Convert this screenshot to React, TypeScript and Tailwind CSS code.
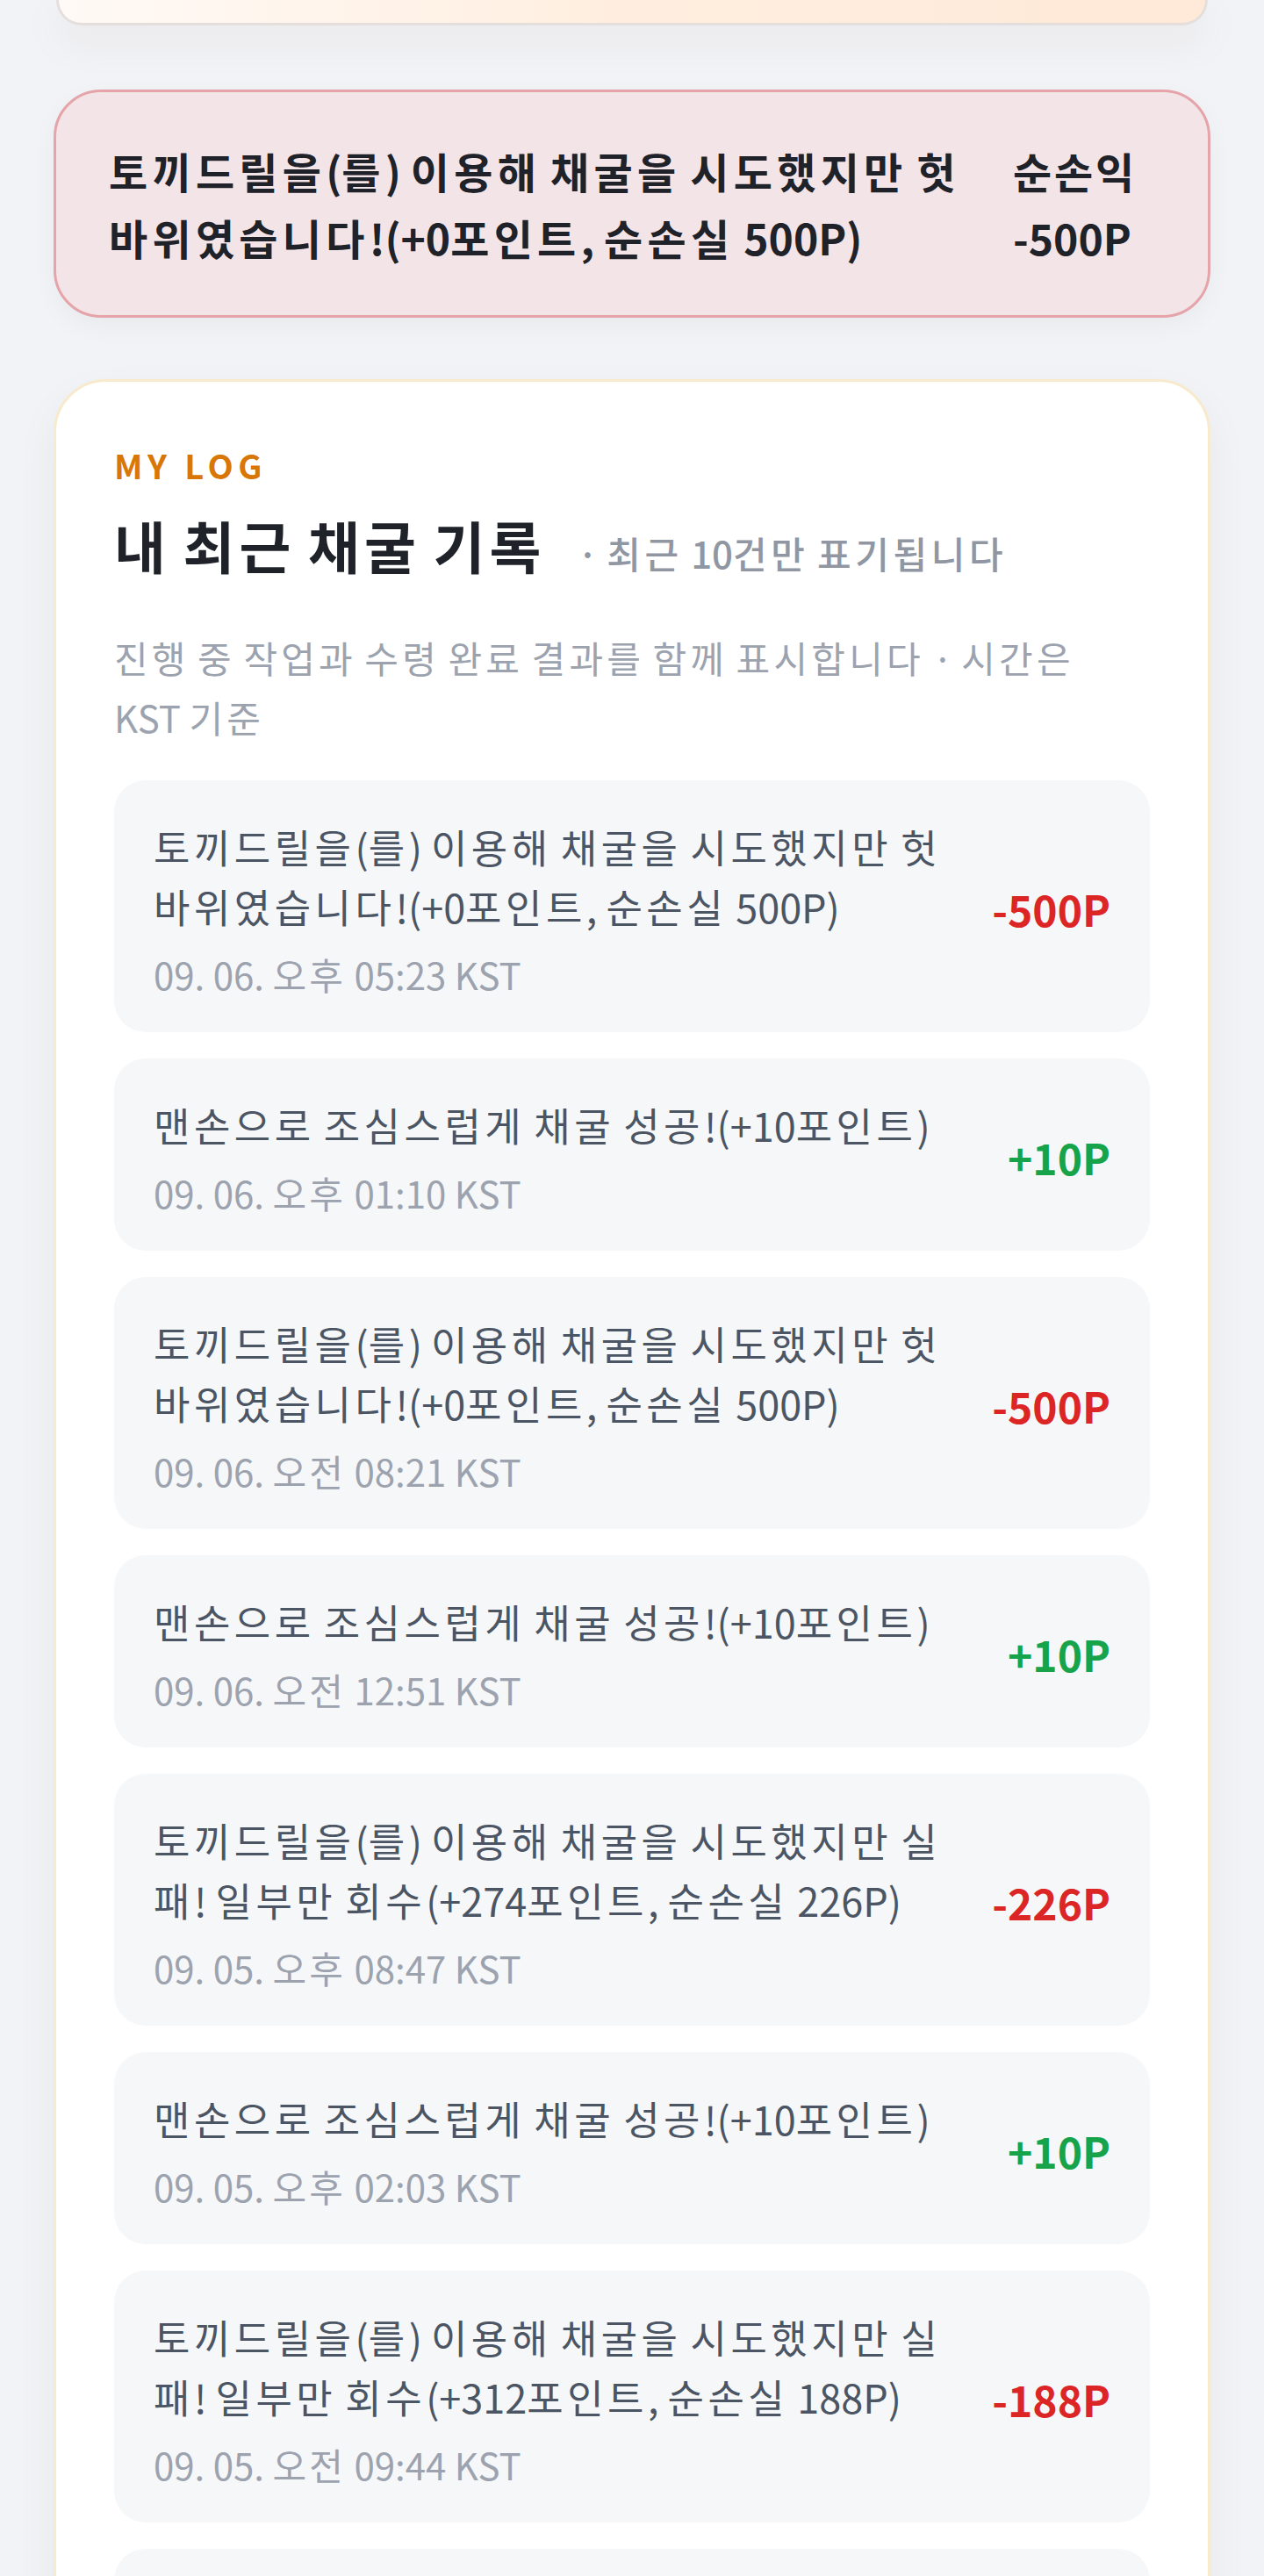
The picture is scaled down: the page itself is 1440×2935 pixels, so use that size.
type LogItem = {
  text: string;
  time: string;
  delta: number;
};

const logs: LogItem[] = [
  { text: "토끼드릴을(를) 이용해 채굴을 시도했지만 헛 바위였습니다!(+0포인트, 순손실 500P)", time: "09. 06. 오후 05:23 KST", delta: -500 },
  { text: "맨손으로 조심스럽게 채굴 성공!(+10포인트)", time: "09. 06. 오후 01:10 KST", delta: 10 },
  { text: "토끼드릴을(를) 이용해 채굴을 시도했지만 헛 바위였습니다!(+0포인트, 순손실 500P)", time: "09. 06. 오전 08:21 KST", delta: -500 },
  { text: "맨손으로 조심스럽게 채굴 성공!(+10포인트)", time: "09. 06. 오전 12:51 KST", delta: 10 },
  { text: "토끼드릴을(를) 이용해 채굴을 시도했지만 실패! 일부만 회수(+274포인트, 순손실 226P)", time: "09. 05. 오후 08:47 KST", delta: -226 },
  { text: "맨손으로 조심스럽게 채굴 성공!(+10포인트)", time: "09. 05. 오후 02:03 KST", delta: 10 },
  { text: "토끼드릴을(를) 이용해 채굴을 시도했지만 실패! 일부만 회수(+312포인트, 순손실 188P)", time: "09. 05. 오전 09:44 KST", delta: -188 },
  { text: "맨손으로 조심스럽게 채굴 성공!(+10포인트)", time: "09. 05. 오전 02:15 KST", delta: 10 },
  { text: "맨손으로 조심스럽게 채굴 성공!(+10포인트)", time: "09. 04. 오후 11:38 KST", delta: 10 },
  { text: "토끼드릴을(를) 이용해 채굴을 시도했지만 헛 바위였습니다!(+0포인트, 순손실 500P)", time: "09. 04. 오후 06:02 KST", delta: -500 },
];

function Ko({ children, wide = "tracking-[0.1em]" }: { children: string; wide?: string }) {
  return (
    <>
      {children.split(/([가-힣]+)/).map((part, i) =>
        /[가-힣]/.test(part) ? (
          <span key={i} className={wide}>
            {part}
          </span>
        ) : (
          part
        )
      )}
    </>
  );
}

function LogRow({ item }: { item: LogItem }) {
  const positive = item.delta > 0;
  return (
    <li className="flex items-center gap-[30px] rounded-[36px] bg-[#f6f7f9] pl-[45px] pr-[45px] pt-[42px] pb-[37px]">
      <div className="min-w-0 flex-1">
        <p className="text-[45px] leading-[68px] text-[#4b5563]">
          <Ko>{item.text}</Ko>
        </p>
        <p className="mt-[13px] text-[42px] leading-[59px] text-[#9ca3af]">
          <Ko wide="tracking-[0.075em]">{item.time}</Ko>
        </p>
      </div>
      <span
        className={
          positive
            ? "shrink-0 text-[48px] font-bold leading-[1.3] text-[#16a34a]"
            : "shrink-0 text-[48px] font-bold leading-[1.3] text-[#dc2626]"
        }
      >
        {positive ? `+${item.delta}P` : `${item.delta}P`}
      </span>
    </li>
  );
}

export default function App() {
  return (
    <div className="min-h-screen bg-[#f1f3f6] px-[61px] pb-[120px] font-['Noto_Sans_CJK_KR',sans-serif]">
      {/* 위 카드의 끝부분 */}
      <div className="mx-[3px] h-[29px] rounded-b-[54px] border-x-[3px] border-b-[3px] border-[#e4dfdc] bg-gradient-to-r from-[#fffaf6] via-[#ffeedf] to-[#ffe9d8] shadow-[0_18px_40px_rgba(190,150,140,0.12)]" />

      {/* 결과 배너 */}
      <div className="mt-[73px] flex items-center gap-[30px] rounded-[54px] border-[3px] border-[#e4a4aa] bg-[#f3e4e7] px-[60px] py-[51px] shadow-[0_10px_30px_rgba(15,23,42,0.04)]">
        <p className="min-w-0 flex-1 text-[48px] font-bold leading-[76px] text-[#1f2329]">
          <Ko wide="tracking-[0.11em]">토끼드릴을(를) 이용해 채굴을 시도했지만 헛 바위였습니다!(+0포인트, 순손실 500P)</Ko>
        </p>
        <div className="w-[162px] shrink-0 text-[48px] font-bold leading-[76px] text-[#1f2329]">
          <p>
            <Ko wide="tracking-[0.06em]">순손익</Ko>
          </p>
          <p>-500P</p>
        </div>
      </div>

      {/* 내 기록 */}
      <section className="mt-[70px] rounded-[60px] border-[3px] border-[#f8eacd] bg-white px-[66px] pt-[66px] pb-[66px] shadow-[0_20px_50px_rgba(15,23,42,0.05)]">
        <p className="text-[38px] font-bold leading-[57px] tracking-[0.15em] text-[#d97706]">MY LOG</p>
        <div className="mt-[22px] flex items-baseline">
          <h2 className="text-[64px] font-bold leading-[80px] text-[#1f2329]">
            <Ko wide="tracking-[0.08em]">내 최근 채굴 기록</Ko>
          </h2>
          <span className="ml-[36px] text-[42px] font-medium leading-[60px] text-[#9097a3]">
            <Ko wide="tracking-[0.11em]">· 최근 10건만 표기됩니다</Ko>
          </span>
        </div>
        <p className="mt-[55px] max-w-[1110px] text-[42px] leading-[68px] text-[#9ca3af]">
          <Ko>진행 중 작업과 수령 완료 결과를 함께 표시합니다 · 시간은 KST 기준</Ko>
        </p>
        <ul className="mt-[38px] flex flex-col gap-[30px]">
          {logs.map((item, i) => (
            <LogRow key={i} item={item} />
          ))}
        </ul>
      </section>
    </div>
  );
}
